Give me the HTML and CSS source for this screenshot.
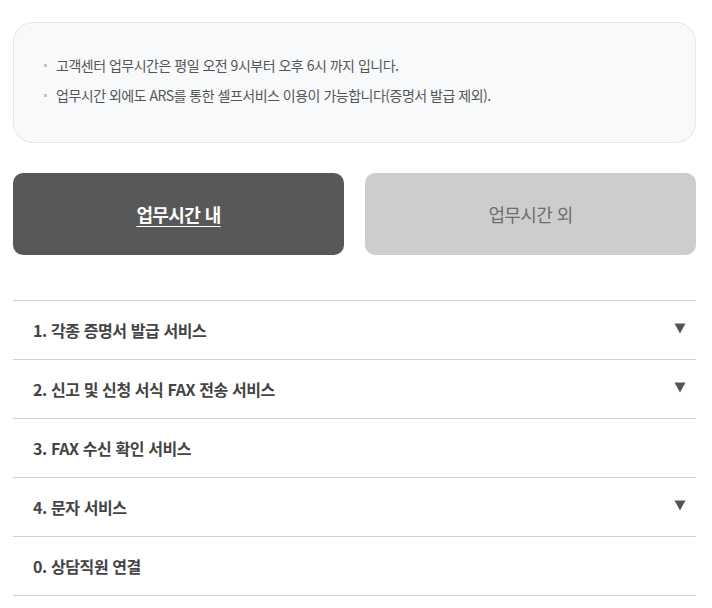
FILE: index.html
```html
<!DOCTYPE html>
<html lang="ko">
<head>
<meta charset="utf-8">
<title>ARS 서비스</title>
<link rel="stylesheet" href="styles.css">
</head>
<body>
<div class="page">
  <div class="notice">
    <ul class="notice-list">
      <li>고객센터 업무시간은 평일 오전 9시부터 오후 6시 까지 입니다.</li>
      <li>업무시간 외에도 ARS를 통한 셀프서비스 이용이 가능합니다(증명서 발급 제외).</li>
    </ul>
  </div>
  <div class="tabs">
    <a class="tab tab-active" href="#">업무시간 내</a>
    <a class="tab tab-inactive" href="#">업무시간 외</a>
  </div>
  <ul class="menu">
    <li class="menu-item"><span class="menu-label">1. 각종 증명서 발급 서비스</span><svg class="arrow" width="12" height="11" viewBox="0 0 12 11"><polygon points="0.5,0.5 11.5,0.5 6,10.5" fill="#555"/></svg></li>
    <li class="menu-item"><span class="menu-label">2. 신고 및 신청 서식 FAX 전송 서비스</span><svg class="arrow" width="12" height="11" viewBox="0 0 12 11"><polygon points="0.5,0.5 11.5,0.5 6,10.5" fill="#555"/></svg></li>
    <li class="menu-item"><span class="menu-label">3. FAX 수신 확인 서비스</span></li>
    <li class="menu-item"><span class="menu-label">4. 문자 서비스</span><svg class="arrow" width="12" height="11" viewBox="0 0 12 11"><polygon points="0.5,0.5 11.5,0.5 6,10.5" fill="#555"/></svg></li>
    <li class="menu-item"><span class="menu-label">0. 상담직원 연결</span></li>
  </ul>
</div>
</body>
</html>
```
FILE: styles.css
```css
* { box-sizing: border-box; }
html, body { margin: 0; padding: 0; background: #fff; }
body {
  font-family: "Noto Sans CJK KR", "Noto Sans", sans-serif;
  color: #555;
}
.page {
  margin: 22px 16px 0 13px;
}
.notice {
  background: #f8f9fa;
  border: 1px solid #e4e6e8;
  border-radius: 20px;
  padding: 27px 30px 30px 30px;
  height: 121px;
}
.notice-list {
  list-style: none;
  margin: 0;
  padding: 0;
}
.notice-list li {
  position: relative;
  padding-left: 12px;
  font-size: 14px;
  line-height: 30px;
  letter-spacing: -0.5px;
  color: #555;
}
.notice-list li::before {
  content: "";
  position: absolute;
  left: 0;
  top: 14px;
  width: 3px;
  height: 3px;
  background: #c4c4c4;
}
.tabs {
  display: flex;
  gap: 21px;
  margin-top: 30px;
}
.tab {
  flex: 1;
  height: 82px;
  border-radius: 10px;
  display: flex;
  align-items: center;
  justify-content: center;
  font-size: 18px;
  letter-spacing: -0.6px;
  text-decoration: none;
}
.tab-active {
  background: #575857;
  color: #fff;
  font-weight: 700;
  text-decoration: underline;
  text-underline-offset: 4px;
  text-decoration-thickness: 1px;
}
.tab-inactive {
  background: #cdcdcd;
  color: #6e6e6e;
}
.menu {
  list-style: none;
  margin: 45px 0 0 0;
  padding: 0;
  border-bottom: 1px solid #d2d2d2;
}
.menu-item {
  display: flex;
  align-items: center;
  justify-content: space-between;
  height: 59px;
  border-top: 1px solid #d2d2d2;
  padding: 0 10px 0 20px;
}
.menu-label {
  font-size: 16px;
  font-weight: 700;
  letter-spacing: -0.4px;
  color: #444;
}
.arrow {
  display: block;
  margin-top: -4px;
}
```
